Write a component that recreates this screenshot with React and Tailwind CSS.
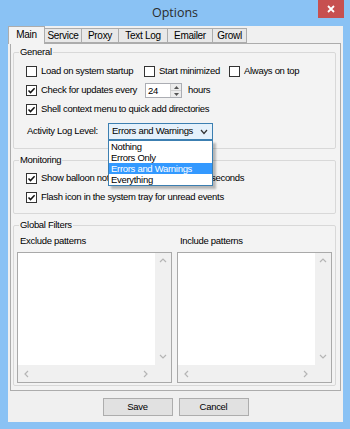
import React from "react";

const tabs = ["Main", "Service", "Proxy", "Text Log", "Emailer", "Growl"];
const tabWidths = ["w-[37px]", "w-[37px]", "w-[37px]", "w-[49px]", "w-[45px]", "w-[34px]"];
const levels = ["Nothing", "Errors Only", "Errors and Warnings", "Everything"];

function Check({ checked }) {
  return (
    <span className="w-[11px] h-[11px] border border-[#333] bg-white flex items-center justify-center shrink-0">
      {checked && (
        <svg width="9" height="9" viewBox="0 0 9 9">
          <path d="M1.5 4.5 L3.5 6.6 L7.6 2.2" stroke="#111" strokeWidth="1.5" fill="none" />
        </svg>
      )}
    </span>
  );
}

function Group({ title, className = "", children }) {
  return (
    <fieldset className={`border border-[#d8d8d8] rounded-[2px] ${className}`}>
      <legend className="ml-[5px] px-[1px] leading-[12px] text-black">{title}</legend>
      {children}
    </fieldset>
  );
}

function Spinner({ value, className = "" }) {
  return (
    <div className={`h-[15px] border border-[#abadb3] bg-white flex ${className}`}>
      <span className="flex-1 pl-[2px] leading-[13px]">{value}</span>
      <div className="w-[11px] flex flex-col border-l border-[#d0d0d0] bg-[#ececec]">
        <div className="flex-1 flex items-center justify-center border-b border-[#d0d0d0]">
          <svg width="5" height="3" viewBox="0 0 5 3"><path d="M0 3 L2.5 0 L5 3Z" fill="#555" /></svg>
        </div>
        <div className="flex-1 flex items-center justify-center">
          <svg width="5" height="3" viewBox="0 0 5 3"><path d="M0 0 L2.5 3 L5 0Z" fill="#555" /></svg>
        </div>
      </div>
    </div>
  );
}

function Chevron({ dir }) {
  const d = {
    up: "M1 5 L4 2 L7 5",
    down: "M1 2 L4 5 L7 2",
    left: "M5 1 L2 4 L5 7",
    right: "M2 1 L5 4 L2 7",
  }[dir];
  return (
    <svg width="8" height="8" viewBox="0 0 8 8">
      <path d={d} stroke="#b5b5b5" strokeWidth="1.2" fill="none" />
    </svg>
  );
}

function PatternBox({ label }) {
  return (
    <div className="flex-1 flex flex-col">
      <span className="pl-[3px] leading-[12px] mb-[5px]">{label}</span>
      <div className="h-[131px] border border-[#a9a9a9] bg-white grid grid-cols-[1fr_16px] grid-rows-[1fr_17px]">
        <div />
        <div className="bg-[#f0f0f0] flex flex-col items-center justify-between py-[4px]">
          <Chevron dir="up" />
          <Chevron dir="down" />
        </div>
        <div className="bg-[#f0f0f0] flex items-center justify-between px-[5px]">
          <Chevron dir="left" />
          <Chevron dir="right" />
        </div>
        <div className="bg-[#f0f0f0]" />
      </div>
    </div>
  );
}

export default function App() {
  return (
    <div className="w-[350px] h-[429px] bg-[#8ac2f4] flex flex-col font-['Liberation_Sans',Arial,sans-serif] text-[9.5px] tracking-[-0.3px] text-black overflow-hidden">
      {/* title bar */}
      <div className="h-[26px] relative flex items-center justify-center">
        <span className="font-['Open_Sans',sans-serif] text-[12.5px] tracking-normal text-[#2b2b2b]">Options</span>
        <div className="absolute right-[6px] top-0 w-[26px] h-[18px] bg-[#c75050] flex items-center justify-center">
          <svg width="8" height="8" viewBox="0 0 8 8">
            <path d="M1 1 L7 7 M7 1 L1 7" stroke="#fff" strokeWidth="1.8" />
          </svg>
        </div>
      </div>

      {/* client area */}
      <div className="flex-1 ml-[8px] mr-[7px] mb-[7px] bg-[#f0f0f0] flex flex-col">
        <div className="h-[17px] flex items-end">
          {tabs.map((t, i) =>
            i === 0 ? (
              <div
                key={t}
                className={`${tabWidths[i]} h-[18px] -mb-px relative z-10 bg-[#f3f3f3] border border-b-0 border-[#acacac] flex items-start justify-center pt-[2px] leading-[12px] text-[10px]`}
              >
                {t}
              </div>
            ) : (
              <div
                key={t}
                className={`${tabWidths[i]} h-[15px] bg-[#e8e8e8] border border-l-0 border-[#acacac] flex items-center justify-center leading-[12px] text-[10px]`}
              >
                {t}
              </div>
            )
          )}
        </div>

        <div className="h-[348px] mx-[2px] border border-[#acacac] bg-[#f3f3f3] pt-[2px] pl-[2px] pr-[4px] flex flex-col">
          <Group title="General" className="pb-[8px]">
            <div className="flex flex-col pl-[12px] pt-[4px]">
              <div className="h-[19px] flex items-center">
                <div className="w-[118px] flex items-center gap-[4px]"><Check /><span>Load on system startup</span></div>
                <div className="w-[85px] flex items-center gap-[4px]"><Check /><span>Start minimized</span></div>
                <div className="flex items-center gap-[4px]"><Check /><span>Always on top</span></div>
              </div>
              <div className="h-[19px] flex items-center">
                <div className="w-[119px] flex items-center gap-[4px]"><Check checked /><span>Check for updates every</span></div>
                <Spinner value="24" className="w-[37px]" />
                <span className="ml-[6px]">hours</span>
              </div>
              <div className="h-[19px] flex items-center">
                <div className="flex items-center gap-[4px]"><Check checked /><span>Shell context menu to quick add directories</span></div>
              </div>
              <div className="mt-[4px] h-[17px] flex items-center pl-[1px]">
                <span className="w-[81px]">Activity Log Level:</span>
                <div className="relative w-[105px] h-[17px]">
                  <div className="h-full border border-[#3c7fb1] bg-[#e5f1fb] flex items-center pl-[3px] pr-[4px] justify-between">
                    <span>Errors and Warnings</span>
                    <svg width="8" height="6" viewBox="0 0 8 6"><path d="M1 1 L4 4.5 L7 1" stroke="#333" strokeWidth="1.2" fill="none" /></svg>
                  </div>
                  <div className="absolute left-0 top-full w-[105px] border border-[#3c7fb1] bg-white z-20 shadow-[3px_3px_2px_rgba(0,0,0,0.25)]">
                    {levels.map((l, i) => (
                      <div
                        key={l}
                        className={`h-[11px] leading-[11px] pl-[2px] ${i === 2 ? "bg-[#3399ff] text-white" : ""}`}
                      >
                        {l}
                      </div>
                    ))}
                  </div>
                </div>
              </div>
            </div>
          </Group>

          <Group title="Monitoring" className="mt-[5px] pb-[6px]">
            <div className="flex flex-col pl-[12px] pt-[3px]">
              <div className="h-[19px] flex items-center">
                <div className="w-[150px] flex items-center gap-[4px]"><Check checked /><span>Show balloon notifications for</span></div>
                <Spinner value="5" className="w-[30px]" />
                <span className="ml-[5px]">seconds</span>
              </div>
              <div className="h-[19px] flex items-center">
                <div className="flex items-center gap-[4px]"><Check checked /><span>Flash icon in the system tray for unread events</span></div>
              </div>
            </div>
          </Group>

          <Group title="Global Filters" className="mt-[5px] pb-[2px]">
            <div className="flex gap-[5px] px-[3px] pt-[4px]">
              <PatternBox label="Exclude patterns" />
              <PatternBox label="Include patterns" />
            </div>
          </Group>
        </div>

        <div className="flex justify-center gap-[6px] pt-[7px]">
          <button className="w-[70px] h-[18px] bg-[#e1e1e1] border border-[#adadad] leading-[16px]">Save</button>
          <button className="w-[70px] h-[18px] bg-[#e1e1e1] border border-[#adadad] leading-[16px]">Cancel</button>
        </div>
      </div>
    </div>
  );
}
